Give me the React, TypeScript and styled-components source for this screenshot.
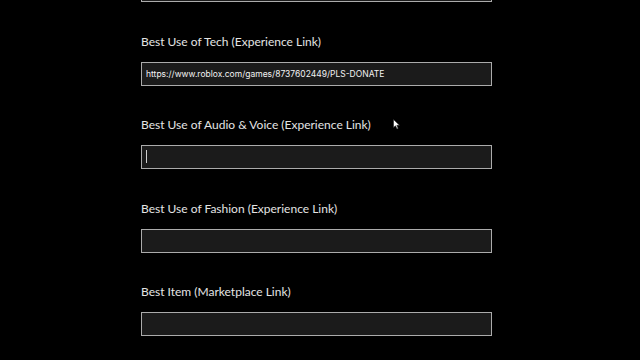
import React from "react";
import styled, { createGlobalStyle } from "styled-components";

const Global = createGlobalStyle`
  html, body { margin: 0; padding: 0; background: #000; }
  body { width: 640px; height: 360px; overflow: hidden; font-family: "Lato", "Noto Sans", sans-serif; }
  * { box-sizing: border-box; }
`;

const Page = styled.div`
  position: relative;
  width: 640px;
  height: 360px;
  overflow: hidden;
  background: #000;
  display: flex;
  flex-direction: column;
  padding-left: 141px;
`;

const Form = styled.div`
  display: flex;
  flex-direction: column;
  width: 351px;
  margin-top: -22px;
`;

const Field = styled.div<{ $first?: boolean }>`
  display: flex;
  flex-direction: column;
  padding-top: ${(p) => (p.$first ? "0" : "31.5px")};
`;

const Label = styled.label`
  color: #e4e4e4;
  font-family: "Lato", "Noto Sans", sans-serif;
  font-size: 12px;
  line-height: 16px;
  margin-bottom: 12px;
  letter-spacing: 0px;
`;

const InputWrap = styled.div`
  position: relative;
  width: 351px;
  height: 24px;
`;

const Input = styled.input`
  display: block;
  width: 100%;
  height: 100%;
  margin: 0;
  padding: 0 4px;
  background: #1b1b1b;
  border: 1.5px solid #ababab;
  border-radius: 0;
  color: #f2f2f2;
  font-family: "Inter", "Noto Sans", sans-serif;
  font-size: 8.5px;
  outline: none;
`;

const Caret = styled.span`
  position: absolute;
  left: 5px;
  top: 5px;
  width: 1px;
  height: 13px;
  background: #cfcfcf;
`;

const Pointer = styled.svg`
  position: absolute;
  left: 393px;
  top: 119px;
`;

const fields = [
  { label: "", value: "" },
  { label: "Best Use of Tech (Experience Link)", value: "https://www.roblox.com/games/8737602449/PLS-DONATE" },
  { label: "Best Use of Audio & Voice (Experience Link)", value: "", caret: true },
  { label: "Best Use of Fashion (Experience Link)", value: "" },
  { label: "Best Item (Marketplace Link)", value: "" },
];

export default function App() {
  return (
    <Page>
      <Global />
      <Form>
        {fields.map((f, i) => (
          <Field key={i} $first={i === 0}>
            {f.label && <Label>{f.label}</Label>}
            <InputWrap>
              <Input readOnly value={f.value} />
              {f.caret && <Caret />}
            </InputWrap>
          </Field>
        ))}
      </Form>
      <Pointer width="8" height="11" viewBox="0 0 8 11">
        <path d="M0.5 0.5 L0.5 8.5 L2.5 6.8 L4 10 L5.2 9.4 L3.8 6.3 L6.5 6.3 Z" fill="#fff" stroke="#222" strokeWidth="0.6" />
      </Pointer>
    </Page>
  );
}
